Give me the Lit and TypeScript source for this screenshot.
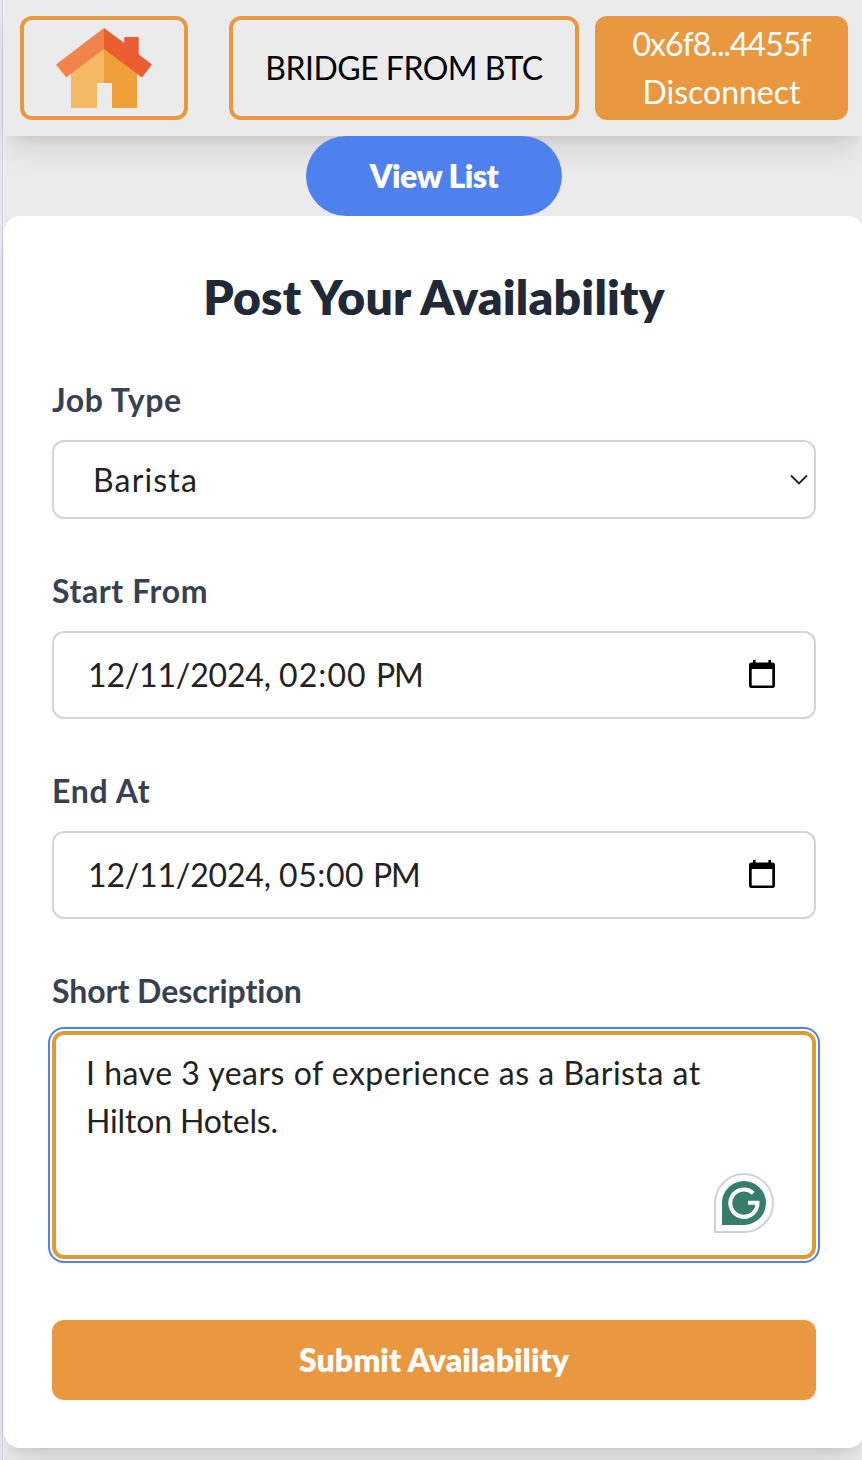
import { LitElement, html, css, svg } from "lit";
import { customElement, property } from "lit/decorators.js";

@customElement("home-icon")
class HomeIcon extends LitElement {
  static styles = css`
    :host { display: block; width: 96px; height: 80px; }
    svg { display: block; }
  `;
  render() {
    return svg`<svg width="96" height="80" viewBox="0 0 96 80">
      <path fill="#f4ba63" d="M15 43 48 18V55H41V80H15Z"/>
      <path fill="#efa039" d="M48 18 81 43V80H56V55H48Z"/>
      <path fill="#f0844b" d="M48 0V21L10.300 49.500 0 36.500Z"/>
      <path fill="#eb5c30" d="M48 0 68.300 15V9H82.700V26.500L96 36.500 86 49.500 48 21Z"/>
    </svg>`;
  }
}

@customElement("app-nav")
class AppNav extends LitElement {
  static styles = css`
    :host {
      display: flex;
      box-sizing: border-box;
      height: 136px;
      padding: 16px;
      background: #ebebeb;
      box-shadow: 0 20px 30px -6px rgba(0, 0, 0, 0.1), 0 8px 12px -8px rgba(0, 0, 0, 0.1);
    }
    .btn {
      box-sizing: border-box;
      height: 104px;
      border: 4px solid #e9983f;
      border-radius: 12px;
      display: flex;
      flex-direction: column;
      align-items: center;
      justify-content: center;
      white-space: nowrap;
      color: #000;
    }
    .home { width: 168px; margin-right: 41px; }
    .bridge { width: 350px; margin-right: 16px; letter-spacing: -0.5px; }
    .wallet { width: 253px; background: #e9983f; color: #fff; }
    .address { letter-spacing: -0.98px; }
  `;
  render() {
    return html`
      <div class="btn home"><home-icon></home-icon></div>
      <div class="btn bridge">BRIDGE FROM BTC</div>
      <div class="btn wallet"><span class="address">0x6f8...4455f</span><span>Disconnect</span></div>
    `;
  }
}

@customElement("form-field")
class FormField extends LitElement {
  @property() label = "";
  static styles = css`
    :host { display: block; margin-bottom: 48px; }
    .label {
      display: block;
      margin-bottom: 16px;
      font-weight: 700;
      color: #374151;
      letter-spacing: var(--label-spacing, 0);
    }
  `;
  render() {
    return html`<span class="label">${this.label}</span><slot></slot>`;
  }
}

@customElement("app-root")
class AppRoot extends LitElement {
  static styles = css`
    :host {
      display: block;
      box-sizing: border-box;
      width: 862px;
      height: 1460px;
      padding-left: 4px;
      overflow: hidden;
      background: linear-gradient(90deg, #e6e9f4 0 2px, #cfd1d8 2px 3px, #f6f6f6 3px 4px, #ebebeb 4px);
      font-family: Lato, "Open Sans", sans-serif;
      font-size: 32px;
      line-height: 48px;
    }
    .page { width: 860px; }
    .view {
      display: flex;
      align-items: center;
      justify-content: center;
      width: 256px;
      height: 80px;
      margin: 0 auto;
      border-radius: 40px;
      background: #4f81ee;
      color: #fff;
      font-weight: 800;
      letter-spacing: -0.5px;
    }
    .card {
      box-sizing: border-box;
      height: 1232px;
      padding: 49px 48px 48px;
      border-radius: 16px;
      background: #fff;
      box-shadow: 0 20px 30px -6px rgba(0, 0, 0, 0.1), 0 8px 12px -8px rgba(0, 0, 0, 0.1);
    }
    .title {
      margin: 0 0 47px;
      font-size: 48px;
      line-height: 64px;
      font-weight: 800;
      text-align: center;
      color: #1f2937;
      letter-spacing: 0.2px;
    }
    .job { --label-spacing: 0.55px; }
    .start { --label-spacing: 0.6px; }
    .end { --label-spacing: 0.7px; }
    .about { --label-spacing: -0.05px; margin-bottom: 61px; }
    .box {
      box-sizing: border-box;
      display: flex;
      align-items: center;
      justify-content: space-between;
      border: 2px solid #d1d5db;
      border-radius: 12px;
      color: #222;
      white-space: nowrap;
    }
    .select { height: 79px; padding: 0 5px 0 39px; letter-spacing: 1.15px; }
    .date { height: 88px; padding: 0 39px 2px 34px; }
    .value { padding-top: 2px; }
    .day { letter-spacing: -0.17px; }
    .time { letter-spacing: 1.1px; }
    .late .time { letter-spacing: 0.6px; }
    .half { letter-spacing: -1.3px; }
    .area {
      align-items: flex-start;
      height: 228px;
      padding: 14px 38px 22px 30px;
      border: 4px solid #dc9b35;
      outline: 2px solid #4f81ee;
      outline-offset: 2px;
    }
    .first { letter-spacing: 0.5px; }
    .second { letter-spacing: -0.15px; }
    .text { flex: none; }
    .badge { align-self: flex-end; flex: none; margin-left: -100px; }
    .submit {
      display: flex;
      align-items: center;
      justify-content: center;
      height: 80px;
      border-radius: 12px;
      background: #e9983f;
      color: #fff;
      font-weight: 800;
    }
    svg { display: block; }
  `;

  private dateBox(day: string, time: string, half: string, extra = "") {
    return html`<div class="box date ${extra}">
      <div class="value"><span class="day">${day}</span> <span class="time">${time} </span><span class="half">${half}</span></div>
      <svg width="26" height="28" viewBox="0 0 26 28">
        <path fill="#000" fill-rule="evenodd" d="M4 0H6.600V2.500H19.400V0H22V2.500H23.500A2.500 2.500 0 0 1 26 5V25.500A2.500 2.500 0 0 1 23.500 28H2.500A2.500 2.500 0 0 1 0 25.500V5A2.500 2.500 0 0 1 2.500 2.500H4ZM2.700 9V25.500H23.300V9Z"/>
      </svg>
    </div>`;
  }

  render() {
    return html`<div class="page">
      <app-nav></app-nav>
      <div class="view">View List</div>
      <div class="card">
        <h2 class="title">Post Your Availability</h2>
        <form-field class="job" label="Job Type">
          <div class="box select">
            <span>Barista</span>
            <svg width="20" height="12" viewBox="0 0 20 12">
              <path d="M2 1.500 10 9.500 18 1.500" fill="none" stroke="#222" stroke-width="1.800"/>
            </svg>
          </div>
        </form-field>
        <form-field class="start" label="Start From">
          ${this.dateBox("12/11/2024,", "02:00", "PM")}
        </form-field>
        <form-field class="end" label="End At">
          ${this.dateBox("12/11/2024,", "05:00", "PM", "late")}
        </form-field>
        <form-field class="about" label="Short Description">
          <div class="box area">
            <div class="text"><span class="first">I have 3 years of experience as a Barista at</span><br /><span class="second">Hilton Hotels.</span></div>
            <svg class="badge" width="60" height="60" viewBox="0 0 60 60">
              <path d="M1 59V30A29 29 0 1 1 30 59Z" fill="#fff" stroke="#cfd0de" stroke-width="2"/>
              <path d="M8 52V30A22 22 0 1 1 30 52Z" fill="#377d6c"/>
              <path d="M39.200 20.300A13.600 13.600 0 1 0 43.500 29.700H34" fill="none" stroke="#fff" stroke-width="4"/>
            </svg>
          </div>
        </form-field>
        <div class="submit">Submit Availability</div>
      </div>
    </div>`;
  }
}
